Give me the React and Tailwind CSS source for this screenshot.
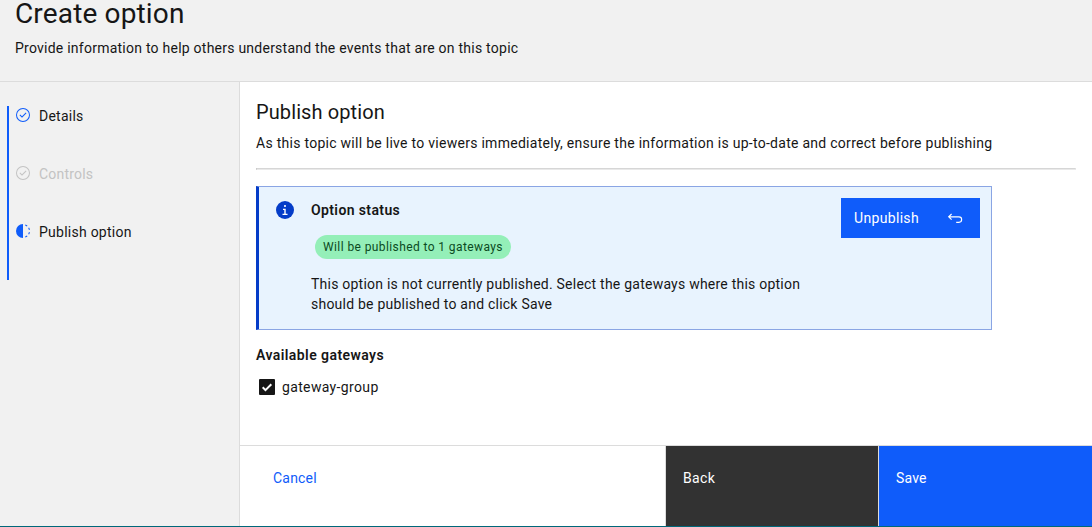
const CheckOutline = ({ className }) => (
  <svg viewBox="0 0 32 32" fill="currentColor" className={className}>
    <path d="M14 21.414L9 16.413 10.413 15 14 18.586 21.585 11 23 12.415 14 21.414z" />
    <path d="M16,2A14,14,0,1,0,30,16,14,14,0,0,0,16,2Zm0,26A12,12,0,1,1,28,16,12,12,0,0,1,16,28Z" />
  </svg>
);

const Incomplete = ({ className }) => (
  <svg viewBox="0 0 32 32" fill="currentColor" className={className}>
    <path d="M23.7642 6.8593l1.2851-1.5315A13.976 13.976 0 0020.8672 2.887l-.6836 1.8776A11.9729 11.9729 0 0123.7642 6.8593zM27.81 14l1.9677-.4128A13.8888 13.8888 0 0028.14 9.0457L26.4087 10A12.52 12.52 0 0127.81 14zM20.1836 27.2354l.6836 1.8776a13.976 13.976 0 004.1821-2.4408l-1.2851-1.5315A11.9729 11.9729 0 0120.1836 27.2354zM26.4087 22L28.14 23a14.14 14.14 0 001.6382-4.5872L27.81 18.0659A12.1519 12.1519 0 0126.4087 22zM16 30V2a14 14 0 000 28z" />
  </svg>
);

const InfoFilled = ({ className }) => (
  <svg viewBox="0 0 20 20" className={className}>
    <circle cx="10" cy="10" r="9" fill="#043cc8" />
    <circle cx="10" cy="6" r="1.05" fill="#fff" />
    <path d="M8 8.7h2.7v5H12.5v1.3h-5v-1.3h1.8V10H8z" fill="#fff" />
  </svg>
);

const Undo = ({ className }) => (
  <svg viewBox="0 0 16 16" fill="none" stroke="currentColor" strokeWidth="1.15" className={className}>
    <path d="M4.6 4L1.7 6.8l2.9 2.8M1.7 6.8h10.2a2.75 2.75 0 0 1 0 5.5H9.2" />
  </svg>
);

const steps = [
  { label: "Details", icon: CheckOutline, tone: "text-[#161616]", iconTone: "text-[#0f5cfa]", tracking: "tracking-[0.25px]" },
  { label: "Controls", icon: CheckOutline, tone: "text-[#c3c3c3]", iconTone: "text-[#c3c3c3]", tracking: "tracking-[0.2px]" },
  { label: "Publish option", icon: Incomplete, tone: "text-[#161616]", iconTone: "text-[#0f5cfa]", tracking: "tracking-[0.25px]" },
];

export default function App() {
  return (
    <div className="flex h-[527px] w-[1092px] flex-col overflow-hidden border-b border-[#00687a] bg-white font-[Roboto,sans-serif] text-sm text-[#161616]">
      <header className="h-[82px] shrink-0 border-b border-[#dcdcdc] bg-[#f1f1f1] pl-[15px]">
        <h1 className="text-[28px] leading-7 tracking-[0.15px]">Create option</h1>
        <p className="mt-[10px] leading-5 tracking-[0.24px]">Provide information to help others understand the events that are on this topic</p>
      </header>
      <div className="flex min-h-0 flex-1">
        <aside className="w-[240px] shrink-0 border-r border-[#dcdcdc] bg-[#f1f1f1] pt-6 pl-[7px]">
          <ol className="border-l-2 border-[#0f5cfa]">
            {steps.map(({ label, icon: Icon, tone, iconTone, tracking }) => (
              <li key={label} className="flex h-[58px] pl-[6px]">
                <Icon className={`mt-px size-4 shrink-0 ${iconTone}`} />
                <span className={`ml-2 leading-5 ${tracking} ${tone}`}>{label}</span>
              </li>
            ))}
          </ol>
        </aside>
        <main className="flex min-w-0 flex-1 flex-col">
          <div className="flex-1 pt-4 pr-4 pl-4">
            <h2 className="text-xl leading-7 tracking-[0.1px]">Publish option</h2>
            <p className="mt-[7px] leading-5 tracking-[0.275px]">As this topic will be live to viewers immediately, ensure the information is up-to-date and correct before publishing</p>
            <hr className="mt-[15px] h-[2px] border border-[#e9e9e9] border-t-[#d6d6d6] border-l-[#bdbdbd]" />
            <section className="mt-4 flex h-[144px] w-[736px] border border-l-[3px] border-[#8aa5e4] border-l-[#043cc8] bg-[#e8f3fe] pt-[11px] pr-[11px] pl-4">
              <InfoFilled className="mt-[2px] size-5 shrink-0" />
              <div className="ml-4 w-[506px]">
                <h3 className="leading-6 font-semibold tracking-[0.38px]">Option status</h3>
                <div className="mt-[13px] ml-1 flex h-6 w-[196px] items-center rounded-full bg-[#94efb8] px-2 text-xs tracking-[0.4px] whitespace-nowrap text-[#0b4a22]">Will be published to 1 gateways</div>
                <p className="mt-[15px] leading-5 tracking-[0.23px]">This option is not currently published. Select the gateways where this option<br />should be published to and click Save</p>
              </div>
              <button className="ml-auto flex h-10 w-[139px] items-center bg-[#0f5cfa] pl-[13px] text-white">
                <span className="tracking-[0.33px]">Unpublish</span>
                <Undo className="mr-[17px] ml-auto size-4" />
              </button>
            </section>
            <h3 className="mt-[15px] leading-5 font-semibold tracking-[0.43px]">Available gateways</h3>
            <label className="mt-3 flex h-5 items-center pl-[3px]">
              <svg viewBox="0 0 16 16" className="size-4"><rect width="16" height="16" rx="1" fill="#161616" /><path d="M3.7 8.3l2.8 2.8 5.8-5.8" fill="none" stroke="#fff" strokeWidth="2" /></svg>
              <span className="ml-[7px] tracking-[0.35px]">gateway-group</span>
            </label>
          </div>
          <footer className="flex h-[81px] shrink-0 border-t border-[#dcdcdc] leading-5 tracking-[0.2px]">
            <button className="flex flex-1 items-start pt-[22px] pl-[33px] text-[#0f5cfa]">Cancel</button>
            <button className="flex w-[214px] items-start border-x border-[#dcdcdc] bg-[#323232] pt-[22px] pl-[17px] tracking-[0.35px] text-white">Back</button>
            <button className="flex w-[213px] items-start bg-[#0f5cfa] pt-[22px] pl-[17px] text-white">Save</button>
          </footer>
        </main>
      </div>
    </div>
  );
}
